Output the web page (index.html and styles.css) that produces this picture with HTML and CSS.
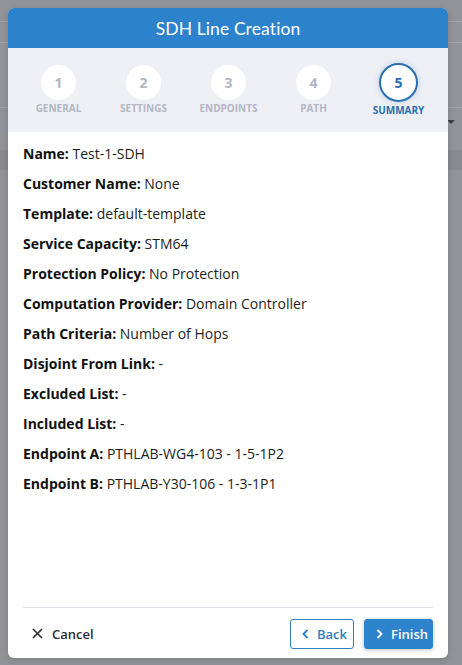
FILE: index.html
```html
<!DOCTYPE html>
<html>
<head>
<meta charset="utf-8">
<link rel="stylesheet" href="styles.css">
</head>
<body>
<div class="backdrop">
  <div class="bg-row r1"></div>
  <div class="bg-row r2"></div>
  <div class="bg-row r3"></div>
  <div class="bg-row r4"><span class="caret"></span></div>
  <div class="bg-band"></div>
</div>
<div class="modal">
  <div class="modal-header">SDH Line Creation</div>
  <div class="stepper">
    <div class="step"><div class="circle">1</div><div class="label">General</div></div>
    <div class="step"><div class="circle">2</div><div class="label">Settings</div></div>
    <div class="step"><div class="circle">3</div><div class="label">Endpoints</div></div>
    <div class="step"><div class="circle">4</div><div class="label">Path</div></div>
    <div class="step active"><div class="circle">5</div><div class="label">Summary</div></div>
  </div>
  <div class="modal-body">
    <div class="line"><b>Name:</b> Test-1-SDH</div>
    <div class="line"><b>Customer Name:</b> None</div>
    <div class="line"><b>Template:</b> default-template</div>
    <div class="line"><b>Service Capacity:</b> STM64</div>
    <div class="line"><b>Protection Policy:</b> No Protection</div>
    <div class="line"><b>Computation Provider:</b> Domain Controller</div>
    <div class="line"><b>Path Criteria:</b> Number of Hops</div>
    <div class="line"><b>Disjoint From Link:</b> -</div>
    <div class="line"><b>Excluded List:</b> -</div>
    <div class="line"><b>Included List:</b> -</div>
    <div class="line"><b>Endpoint A:</b> PTHLAB-WG4-103 - 1-5-1P2</div>
    <div class="line"><b>Endpoint B:</b> PTHLAB-Y30-106 - 1-3-1P1</div>
  </div>
  <div class="modal-footer">
    <button class="btn-cancel">
      <svg class="ico" width="11" height="11" viewBox="0 0 11 11"><path d="M1 1L10 10M10 1L1 10" stroke="#2b2d33" stroke-width="1.6" fill="none"/></svg>
      <span>Cancel</span>
    </button>
    <div class="actions">
      <button class="btn btn-back">
        <svg class="ico" width="7" height="10" viewBox="0 0 7 10"><path d="M5.5 1L1.5 5L5.5 9" stroke="#2f7fc1" stroke-width="1.8" fill="none"/></svg>
        <span>Back</span>
      </button>
      <button class="btn btn-finish">
        <svg class="ico" width="7" height="10" viewBox="0 0 7 10"><path d="M1.5 1L5.5 5L1.5 9" stroke="#ffffff" stroke-width="1.8" fill="none"/></svg>
        <span>Finish</span>
      </button>
    </div>
  </div>
</div>
</body>
</html>
```

FILE: styles.css
```css
* { box-sizing: border-box; }
html, body { margin: 0; padding: 0; }
body {
  width: 462px;
  height: 665px;
  background: #939499;
  font-family: "Open Sans", "Lato", sans-serif;
  overflow: hidden;
  position: relative;
}
.backdrop {
  display: flex;
  flex-direction: column;
}
.bg-row {
  border-bottom: 1px solid #a4a5aa;
  position: relative;
}
.r1 { height: 22px; }
.r2 { height: 21px; }
.r3 { height: 65px; }
.r4 { height: 42px; border-bottom: none; }
.bg-band { height: 20px; background: #8a8b90; }
.caret {
  position: absolute;
  right: 7px;
  top: 12px;
  width: 0; height: 0;
  border-left: 4px solid transparent;
  border-right: 4px solid transparent;
  border-top: 4px solid #3d3e44;
}
.modal {
  position: absolute;
  left: 8px;
  top: 8px;
  width: 440px;
  height: 650px;
  background: #ffffff;
  border-radius: 6px;
  overflow: hidden;
  display: flex;
  flex-direction: column;
  box-shadow: 0 2px 8px rgba(0,0,0,0.15);
}
.modal-header {
  height: 40px;
  background: #2d83cb;
  color: #ffffff;
  font-family: "Lato", sans-serif;
  font-size: 17.5px;
  display: flex;
  align-items: center;
  justify-content: center;
  letter-spacing: 0.1px;
}
.stepper {
  height: 84px;
  background: #eef0f5;
  display: grid;
  grid-template-columns: repeat(5, 85px);
  padding: 0 7px 0 8px;
}
.step {
  display: flex;
  flex-direction: column;
  align-items: center;
  padding-top: 17px;
}
.circle {
  width: 35px;
  height: 35px;
  border-radius: 50%;
  background: #ffffff;
  color: #b3b6c4;
  font-weight: bold;
  font-size: 14px;
  display: flex;
  align-items: center;
  justify-content: center;
}
.label {
  margin-top: 1px;
  font-size: 10px;
  font-weight: bold;
  text-transform: uppercase;
  color: #b3b6c4;
}
.step.active { padding-top: 15px; }
.step.active .circle {
  width: 39px;
  height: 39px;
  border: 2px solid #2a6fb0;
  color: #2a6fb0;
  box-shadow: 0 0 6px rgba(42,111,176,0.25);
}
.step.active .label {
  color: #2a6fb0;
  margin-top: 1px;
}
.modal-body {
  flex: 1;
  padding: 12px 15px 0 15px;
  display: flex;
  flex-direction: column;
  gap: 10px;
}
.line {
  font-size: 14px;
  line-height: 20px;
  color: #1c1d21;
}
.line b { font-weight: bold; color: #111; }
.modal-footer {
  margin: 0 15px;
  border-top: 1px solid #e3e5ea;
  height: 51px;
  display: flex;
  align-items: center;
  justify-content: space-between;
  padding-top: 1px;
}
button {
  font-family: inherit;
  cursor: pointer;
}
.ico { flex-shrink: 0; display: block; }
.btn-cancel {
  background: none;
  border: none;
  display: flex;
  align-items: center;
  gap: 9px;
  font-size: 13px;
  font-weight: 600;
  color: #2b2d33;
  padding: 0 0 0 9px;
}
.actions {
  display: flex;
  gap: 10px;
}
.btn {
  height: 30px;
  border-radius: 3px;
  font-size: 13px;
  font-weight: 600;
  display: flex;
  align-items: center;
  gap: 8px;
  padding: 0 0 0 11px;
}
.btn-back {
  width: 64px;
  background: #ffffff;
  border: 1px solid #2f7fc1;
  color: #2f7fc1;
}
.btn-finish {
  width: 69px;
  background: #2d84cc;
  border: 1px solid #2d84cc;
  color: #ffffff;
  box-shadow: 0 1px 4px rgba(0,0,0,0.25);
}
```
